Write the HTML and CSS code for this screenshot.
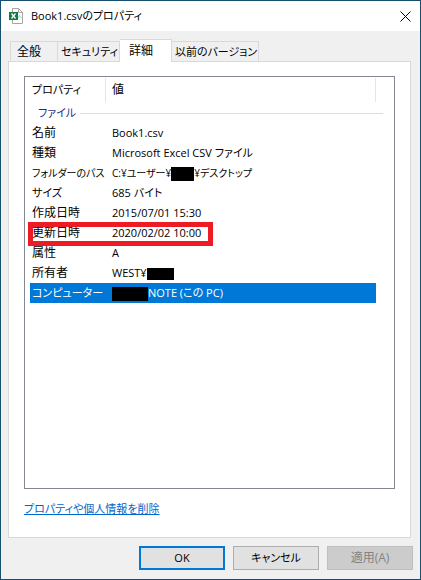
FILE: index.html
```html
<!DOCTYPE html>
<html lang="ja">

<head>
    <meta charset="UTF-8">
    <meta name="viewport" content="width=device-width, initial-scale=1.0">
    <title>Book1.csvのプロパティ</title>
    <link rel="stylesheet" href="styles.css">
</head>

<body>
    <div class="window">
        <header class="titlebar">
            <svg class="file-icon" width="16" height="16" viewBox="0 0 16 16">
                <path d="M3.5 .5h6l4 4v11h-10z" fill="#fff" stroke="#a6a6a6" />
                <path d="M9.5 .5v4h4" fill="none" stroke="#a6a6a6" />
                <path d="M9 10l1.500-2.500 1 1.500 1.500 1.500" fill="none" stroke="#8fdcb8" />
                <rect x="0" y="4" width="9" height="8" fill="#107c41" />
                <path d="M2.500 5.500l4 5M6.500 5.500l-4 5" stroke="#fff" stroke-width="1.300" />
            </svg>
            <h1 class="title">Book1.csvのプロパティ</h1>
            <button class="close" type="button" aria-label="閉じる">
                <svg width="11" height="11" viewBox="0 0 11 11">
                    <path d="M.5 .5l10 10M10.500 .5l-10 10" stroke="#000" />
                </svg>
            </button>
        </header>

        <main class="content">
            <div class="tabs" role="tablist">
                <button class="tab short" type="button" role="tab">全般</button>
                <button class="tab" type="button" role="tab">セキュリティ</button>
                <button class="tab short active" type="button" role="tab" aria-selected="true">詳細</button>
                <button class="tab" type="button" role="tab">以前のバージョン</button>
            </div>

            <section class="panel">
                <div class="list">
                    <table class="details">
                        <thead>
                            <tr>
                                <th class="name"><div class="head">プロパティ</div></th>
                                <th class="value"><div class="head">値</div></th>
                                <th class="edge"></th>
                            </tr>
                        </thead>
                        <tbody>
                            <tr>
                                <th colspan="3"><div class="group">ファイル</div></th>
                            </tr>
                            <tr>
                                <td>名前</td>
                                <td>Book1.csv</td>
                            </tr>
                            <tr>
                                <td>種類</td>
                                <td>Microsoft Excel CSV ファイル</td>
                            </tr>
                            <tr class="long">
                                <td>フォルダーのパス</td>
                                <td>C:¥ユーザー¥<span class="mask folder"></span>¥デスクトップ</td>
                            </tr>
                            <tr>
                                <td class="kana">サイズ</td>
                                <td>685 バイト</td>
                            </tr>
                            <tr>
                                <td>作成日時</td>
                                <td>2015/07/01 15:30</td>
                            </tr>
                            <tr>
                                <td class="marked">更新日時<span class="marker"></span></td>
                                <td>2020/02/02 10:00</td>
                            </tr>
                            <tr>
                                <td>属性</td>
                                <td>A</td>
                            </tr>
                            <tr>
                                <td>所有者</td>
                                <td>WEST¥<span class="mask owner"></span></td>
                            </tr>
                            <tr class="selected">
                                <td>コンピューター</td>
                                <td><span class="mask computer"></span>NOTE (この PC)</td>
                            </tr>
                        </tbody>
                    </table>
                </div>
                <a class="remove" href="#">プロパティや個人情報を削除</a>
            </section>
        </main>

        <footer class="buttons">
            <button class="btn primary" type="button">OK</button>
            <button class="btn" type="button">キャンセル</button>
            <button class="btn" type="button" disabled>適用(A)</button>
        </footer>
    </div>
</body>

</html>
```
FILE: styles.css
```css
* {
    margin: 0;
    padding: 0;
    box-sizing: border-box;
}

body {
    font-family: "Open Sans", "Noto Sans CJK JP", sans-serif;
    font-size: 11px;
    line-height: 20px;
    font-feature-settings: "palt";
    color: #000;
}

button {
    font: inherit;
    font-feature-settings: inherit;
    color: inherit;
}

.window {
    display: flex;
    flex-direction: column;
    min-height: 100vh;
    border: 1px solid #17506e;
    background: #f0f0f0;
}

.titlebar {
    display: flex;
    align-items: center;
    height: 30px;
    padding: 0 9px 0 8px;
    background: #fff;
}

.title {
    flex: 1;
    margin-left: 6px;
    font-size: 11px;
    font-weight: normal;
}

.close {
    display: flex;
    border: none;
    background: none;
}

.content {
    flex: 1;
    display: flex;
    flex-direction: column;
    padding: 8px 9px 0 7px;
}

.tabs {
    display: flex;
    align-items: flex-end;
    padding-left: 2px;
}

.tab {
    height: 20px;
    padding: 0 1px 0 3px;
    border: 1px solid #d9d9d9;
    border-bottom: none;
    border-left: none;
    background: #f0f0f0;
    line-height: 19px;
    white-space: nowrap;
}

.tab.short {
    font-size: 12px;
}

.tab:first-child {
    padding: 0 16px 0 6px;
    border-left: 1px solid #d9d9d9;
}

.tab.active {
    position: relative;
    height: 23px;
    margin-bottom: -1px;
    padding: 0 18px 0 9px;
    background: #fff;
    line-height: 20px;
}

.panel {
    flex: 1;
    display: flex;
    flex-direction: column;
    padding: 14px 15px;
    border: 1px solid #d9d9d9;
    background: #fff;
}

.list {
    flex: 1;
    border: 1px solid #828790;
    padding: 0 11px 0 5px;
}

.details {
    width: 100%;
    table-layout: fixed;
    border-collapse: collapse;
}

.details th {
    font-weight: normal;
    text-align: left;
}

.details td {
    height: 20px;
    padding-left: 6px;
    white-space: nowrap;
}

.details td:first-child {
    padding-left: 2px;
    font-size: 12px;
}

.details td.kana:first-child,
.details .selected td:first-child {
    font-size: 11px;
}

.details .long td {
    font-size: 10px;
}

.name {
    width: 76px;
}

.value {
    font-size: 12px;
}

.edge {
    width: 7px;
}

.head {
    height: 24px;
    margin: 1px 0;
    padding-left: 6px;
    border-right: 1px solid #e5e5e5;
    line-height: 24px;
}

.name .head {
    padding-left: 2px;
}

.group {
    display: flex;
    align-items: center;
    gap: 4px;
    padding-left: 8px;
    line-height: 20px;
    color: #1e3287;
}

.group::after {
    content: "";
    flex: 1;
    height: 1px;
    background: #d5dff0;
}

.selected td {
    background: #0078d7;
    color: #fff;
}

.mask {
    display: inline-block;
    height: 14px;
    background: #000;
    vertical-align: middle;
}

.folder {
    width: 23px;
}

.owner {
    width: 27px;
    height: 12px;
}

.computer {
    width: 36px;
}

.marked {
    position: relative;
}

.marker {
    position: absolute;
    top: -1px;
    left: -2px;
    width: 185px;
    height: 24px;
    border: 5px solid #ed1c24;
}

.remove {
    align-self: flex-start;
    margin: 10px 0 4px;
    color: #0066cc;
}

.buttons {
    display: flex;
    justify-content: flex-end;
    gap: 8px;
    padding: 8px 7px 9px;
}

.btn {
    width: 86px;
    height: 24px;
    border: 1px solid #adadad;
    background: #e1e1e1;
}

.btn.primary {
    border: 2px solid #0078d7;
}

.btn:disabled {
    border-color: #bfbfbf;
    background: #ccc;
    color: #838383;
    font-size: 12px;
}
```
